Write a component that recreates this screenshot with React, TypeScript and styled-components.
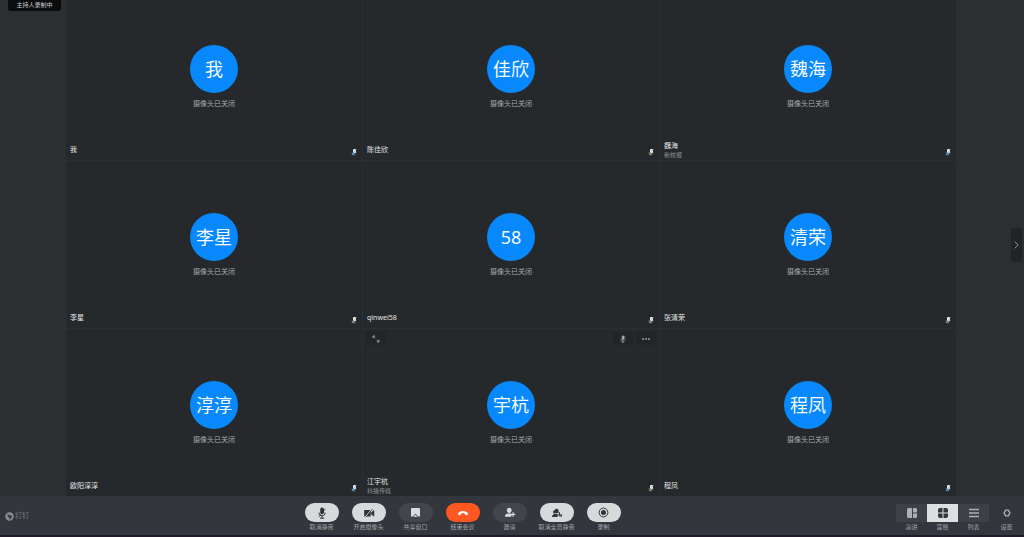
import React from "react";
import styled, { createGlobalStyle } from "styled-components";

const GlobalStyle = createGlobalStyle`
  * { box-sizing: border-box; }
  html, body { margin: 0; height: 100%; }
  #root { height: 100%; }
  body {
    background: #2b2f32;
    font-family: "Noto Sans", "Noto Sans CJK SC", sans-serif;
  }
  button { font: inherit; color: inherit; border: 0; padding: 0; cursor: pointer; }
`;

const Page = styled.div`
  display: flex;
  flex-direction: column;
  height: 100%;
  overflow: hidden;
  border-bottom: 2px solid #1f1b2a;
`;

const Stage = styled.main`
  position: relative;
  display: flex;
  flex: 1;
  min-height: 0;
  padding: 0 67px 0 66px;
  overflow: hidden;
  background: #2b2f32;
`;

const Recording = styled.div`
  position: absolute;
  top: 0;
  left: 8px;
  width: 53px;
  height: 11px;
  border-radius: 0 0 3px 3px;
  background: #0b0c0e;
  color: #c9cbcc;
  font-size: 6px;
  line-height: 11px;
  text-align: center;
  white-space: nowrap;
`;

const Grid = styled.div`
  display: grid;
  flex: 1;
  grid-template-columns: repeat(3, 1fr);
  grid-template-rows: repeat(3, 1fr);
  margin: -7px 0 -1px;
`;

const Tile = styled.section`
  position: relative;
  display: flex;
  flex-direction: column;
  align-items: center;
  justify-content: center;
  min-width: 0;
  background: #26292c;
  border-right: 1px solid #2b2e31;
  border-bottom: 1px solid #2c2f32;
`;

const Avatar = styled.div`
  display: flex;
  align-items: center;
  justify-content: center;
  width: 48px;
  height: 48px;
  border-radius: 50%;
  background: #0788fd;
  color: #f4faff;
  font-size: 18px;
  line-height: 24px;
`;

const CameraStatus = styled.p`
  margin: 6px 0 0;
  color: #a6a8aa;
  font-size: 7px;
  line-height: 10px;
`;

const TileFooter = styled.footer`
  position: absolute;
  left: 4px;
  right: 5px;
  bottom: 0;
  display: flex;
  align-items: center;
  justify-content: space-between;
  height: 20px;
  color: #e4e6e6;
`;

const Person = styled.div`
  display: flex;
  flex-direction: column;
  font-size: 7px;
  line-height: 10px;
`;

const Department = styled.span`
  color: #8f9294;
  font-size: 6px;
  line-height: 9px;
`;

const MicSlot = styled.span`
  display: flex;
  padding-top: 4px;
`;

const TileTools = styled.div`
  position: absolute;
  top: 3px;
  left: 3px;
  right: 3px;
  display: flex;
  gap: 3px;
`;

const TileButton = styled.button<{ $push?: boolean }>`
  display: flex;
  align-items: center;
  justify-content: center;
  width: 20px;
  height: 13px;
  margin-left: ${(p) => (p.$push ? "auto" : "0")};
  border-radius: 2px;
  background: #222528;
  color: #a3a5a7;
`;

const Drawer = styled.button`
  position: absolute;
  top: 228px;
  right: 2px;
  display: flex;
  align-items: center;
  justify-content: center;
  width: 11px;
  height: 34px;
  border-radius: 2px;
  background: #212427;
  color: #9b9ea0;
`;

const Bar = styled.footer`
  display: flex;
  align-items: flex-start;
  height: 39px;
  padding: 7px 0 0 5px;
  background: #33363d;
`;

const Brand = styled.div`
  display: flex;
  align-items: center;
  gap: 1px;
  height: 26px;
  color: #74777d;
  font-size: 7px;
  line-height: 10px;
`;

const Actions = styled.nav`
  display: flex;
  gap: 13px;
  margin: 0 auto;
`;

const Control = styled.button<{ $width: number }>`
  display: flex;
  flex-direction: column;
  align-items: center;
  gap: 1px;
  width: ${(p) => p.$width}px;
  background: none;
  color: #a2a5a9;
  font-size: 6px;
  line-height: 9px;
  white-space: nowrap;
`;

const tones = {
  light: { bg: "#d6dadb", fg: "#2f3336" },
  dark: { bg: "#42454a", fg: "#d9dcdd" },
  danger: { bg: "#ff5722", fg: "#ffffff" },
};

const Pill = styled.span<{ $tone: keyof typeof tones }>`
  display: flex;
  align-items: center;
  justify-content: center;
  width: 34px;
  height: 19px;
  border-radius: 10px;
  background: ${(p) => tones[p.$tone].bg};
  color: ${(p) => tones[p.$tone].fg};
`;

const Views = styled.div`
  display: flex;
  padding-top: 1px;
`;

const ViewFace = styled.span<{ $active?: boolean; $plain?: boolean }>`
  display: flex;
  align-items: center;
  justify-content: center;
  width: 100%;
  height: 18px;
  background: ${(p) => (p.$active ? "#dcdfe2" : p.$plain ? "transparent" : "#3d4045")};
  color: ${(p) => (p.$active ? "#33363a" : "#adb0b3")};
`;

const Mic = ({ size = 8 }: { size?: number }) => (
  <svg width={size} height={size} viewBox="0 0 12 12" fill="none" stroke="currentColor">
    <rect x="4.2" y="0.6" width="3.8" height="6.6" rx="1.9" fill="currentColor" stroke="none" />
    <path d="M3 5.6c0 4.3 6.200 4.300 6.200 0M6.100 8.800v2.400M4 11.200h4.200" strokeWidth="1" />
    <path d="M9.400 1.800 2.800 10" strokeWidth="0.8" />
  </svg>
);

const TileMic = ({ tint }: { tint: string }) => (
  <svg width="6" height="8" viewBox="0 0 6 8" aria-label="静音">
    <rect x="2" y="1" width="3" height="4" rx="1" fill="#e9edee" />
    <path d="M1 4.500c.4 2 3.600 2 4 0M3 6v1.500M5.400 1 1 7" stroke={tint} strokeWidth=".8" fill="none" />
  </svg>
);

const icons: Record<string, React.ReactNode> = {
  mic: <Mic size={12} />,
  camera: (
    <svg width="12" height="10" viewBox="0 0 12 10">
      <path d="M1.200 2h6.500v6.500H1.200zM8.200 4.200 11.200 2v6.500L8.200 6.400z" fill="currentColor" />
      <path d="M8.800.8 2.400 9" stroke="#d6dadb" strokeWidth="1" />
      <path d="M9.600.8 3.200 9.200" stroke="currentColor" strokeWidth=".7" />
    </svg>
  ),
  share: (
    <svg width="11" height="11" viewBox="0 0 10 10">
      <path d="M1.800 1h6.400q.9 0 .9.9V8.600H7.400L5 6.200 2.600 8.600H.9V1.900q0-.9.9-.9z" fill="currentColor" />
      <path d="M5 7 6.800 9H3.200z" fill="currentColor" />
    </svg>
  ),
  hangup: (
    <svg width="12" height="8" viewBox="0 0 12 8">
      <path d="M1.100 4.300C3.300 1.100 8.700 1.100 10.900 4.300q.4.800-.3 1.400l-.5.400q-.5.300-1 0L7.700 5.200q-.3-.3-.2-.9-1.500-.5-3 0 .1.600-.2.900L2.900 6.100q-.5.300-1 0l-.5-.4q-.7-.6-.3-1.400z" fill="currentColor" />
    </svg>
  ),
  invite: (
    <svg width="12" height="11" viewBox="0 0 11 10">
      <ellipse cx="4.800" cy="3" rx="2.100" ry="2.400" fill="currentColor" />
      <path d="M.8 9q0-2.600 3-3h2q.6.100 1 .3V9z" fill="currentColor" />
      <path d="M8.300 4.800v4M6.300 6.800h4" stroke="currentColor" strokeWidth="1.100" />
    </svg>
  ),
  unmuteAll: (
    <svg width="12" height="10" viewBox="0 0 12 10">
      <ellipse cx="5.600" cy="3.100" rx="2" ry="2.400" fill="currentColor" />
      <ellipse cx="3.400" cy="4" rx="1.300" ry="1.800" fill="currentColor" />
      <path d="M1 9q0-2.600 3-3h2.600v3z" fill="currentColor" />
      <path d="M8.500 4.200v3.200M7.200 6.200q.1 2 2.400 2 1.100-.3 1.200-2M7.300 3.600l3.400 5.300" stroke="currentColor" fill="none" strokeWidth=".9" />
    </svg>
  ),
  record: (
    <svg width="11" height="11" viewBox="0 0 11 11">
      <circle cx="5.500" cy="5.500" r="4.400" stroke="currentColor" fill="none" />
      <circle cx="5.500" cy="5.500" r="2.500" fill="currentColor" />
    </svg>
  ),
  speaker: (
    <svg width="10" height="10" viewBox="0 0 10 10" fill="currentColor">
      <path d="M1.500 0H5v10H1.500Q0 10 0 8.500V1.500Q0 0 1.500 0zM6 0h2.500Q10 0 10 1.500V4.500H6zM6 5.500h4V8.500Q10 10 8.500 10H6z" />
    </svg>
  ),
  gallery: (
    <svg width="10" height="10" viewBox="0 0 10 10" fill="currentColor">
      <path d="M2 0h2.500v4.500H0V2Q0 0 2 0zM5.500 0H8q2 0 2 2v2.500H5.500zM0 5.500h4.500V10H2Q0 10 0 8zM5.500 5.500H10V8q0 2-2 2H5.500z" />
    </svg>
  ),
  list: (
    <svg width="10" height="10" viewBox="0 0 10 10" stroke="currentColor" strokeWidth="1.300">
      <path d="M0 1.500h10M0 5h10M0 8.500h10" />
    </svg>
  ),
  settings: (
    <svg width="8" height="8" viewBox="0 0 8 8" fill="none" stroke="currentColor">
      <path d="M2.700 1.100h2.600L7 4 5.300 6.900H2.700L1 4z" strokeWidth="1.400" strokeLinejoin="round" />
    </svg>
  ),
};

const people = [
  { short: "我", name: "我", tint: "#7fb4dd" },
  { short: "佳欣", name: "陈佳欣", tint: "#c2a98f" },
  { short: "魏海", name: "魏海", dept: "新校报", tint: "#7fb4dd" },
  { short: "李星", name: "李星", tint: "#aeb3b5" },
  { short: "58", name: "qinwei58", tint: "#aeb3b5" },
  { short: "清荣", name: "张清荣", tint: "#aeb3b5" },
  { short: "淳淳", name: "欧阳淳淳", tint: "#7fb4dd" },
  { short: "宇杭", name: "江宇杭", dept: "抖播传媒", tint: "#c2a98f", tools: true },
  { short: "程凤", name: "程凤", tint: "#7fb4dd" },
];

const actions: { icon: string; label: string; tone: keyof typeof tones }[] = [
  { icon: "mic", label: "取消静音", tone: "light" },
  { icon: "camera", label: "开启摄像头", tone: "light" },
  { icon: "share", label: "共享窗口", tone: "dark" },
  { icon: "hangup", label: "结束会议", tone: "danger" },
  { icon: "invite", label: "邀请", tone: "dark" },
  { icon: "unmuteAll", label: "取消全员静音", tone: "light" },
  { icon: "record", label: "录制", tone: "light" },
];

const views = [
  { icon: "speaker", label: "演讲" },
  { icon: "gallery", label: "宫格", active: true },
  { icon: "list", label: "列表" },
  { icon: "settings", label: "设置", plain: true },
];

export default function App() {
  return (
    <Page lang="zh-CN">
      <GlobalStyle />
      <Stage>
        <Grid>
          {people.map((p) => (
            <Tile key={p.name}>
              {p.tools && (
                <TileTools>
                  <TileButton aria-label="放大">
                    <svg width="8" height="8" viewBox="0 0 8 8" fill="none" stroke="currentColor" strokeWidth=".9">
                      <path d="M1 3.200V1h2.200M1 1l2.300 2.300M7 4.800V7H4.800M7 7 4.700 4.700" />
                    </svg>
                  </TileButton>
                  <TileButton $push aria-label="静音"><Mic /></TileButton>
                  <TileButton aria-label="更多">
                    <svg width="8" height="2" viewBox="0 0 8 2" fill="currentColor">
                      <circle cx="1" cy="1" r=".9" /><circle cx="4" cy="1" r=".9" /><circle cx="7" cy="1" r=".9" />
                    </svg>
                  </TileButton>
                </TileTools>
              )}
              <Avatar>{p.short}</Avatar>
              <CameraStatus>摄像头已关闭</CameraStatus>
              <TileFooter>
                <Person>
                  {p.name}
                  {p.dept && <Department>{p.dept}</Department>}
                </Person>
                <MicSlot><TileMic tint={p.tint} /></MicSlot>
              </TileFooter>
            </Tile>
          ))}
        </Grid>
        <Recording>主持人录制中</Recording>
        <Drawer aria-label="展开侧栏">
          <svg width="5" height="8" viewBox="0 0 5 8" fill="none" stroke="currentColor" strokeWidth=".9">
            <path d="M.7.700 4.200 4 .7 7.300" />
          </svg>
        </Drawer>
      </Stage>
      <Bar>
        <Brand>
          <svg width="9" height="9" viewBox="0 0 9 9">
            <circle cx="4.500" cy="4.500" r="4.200" fill="#8a8d92" />
            <path d="M2.200 2q2 1.300 4.700 1.700.2.800-1 2.100h.8L4.400 7.900l.4-1.500H4l.3-.8Q2.700 5 2.400 3.700l1.300.3Q2.300 3.200 2.200 2z" fill="#33363d" />
          </svg>
          钉钉
        </Brand>
        <Actions>
          {actions.map((a) => (
            <Control key={a.label} $width={34}>
              <Pill $tone={a.tone}>{icons[a.icon]}</Pill>
              <span>{a.label}</span>
            </Control>
          ))}
        </Actions>
        <Views>
          {views.map((v) => (
            <Control key={v.label} $width={v.plain ? 35 : 31} aria-pressed={v.active}>
              <ViewFace $active={v.active} $plain={v.plain}>{icons[v.icon]}</ViewFace>
              <span>{v.label}</span>
            </Control>
          ))}
        </Views>
      </Bar>
    </Page>
  );
}
